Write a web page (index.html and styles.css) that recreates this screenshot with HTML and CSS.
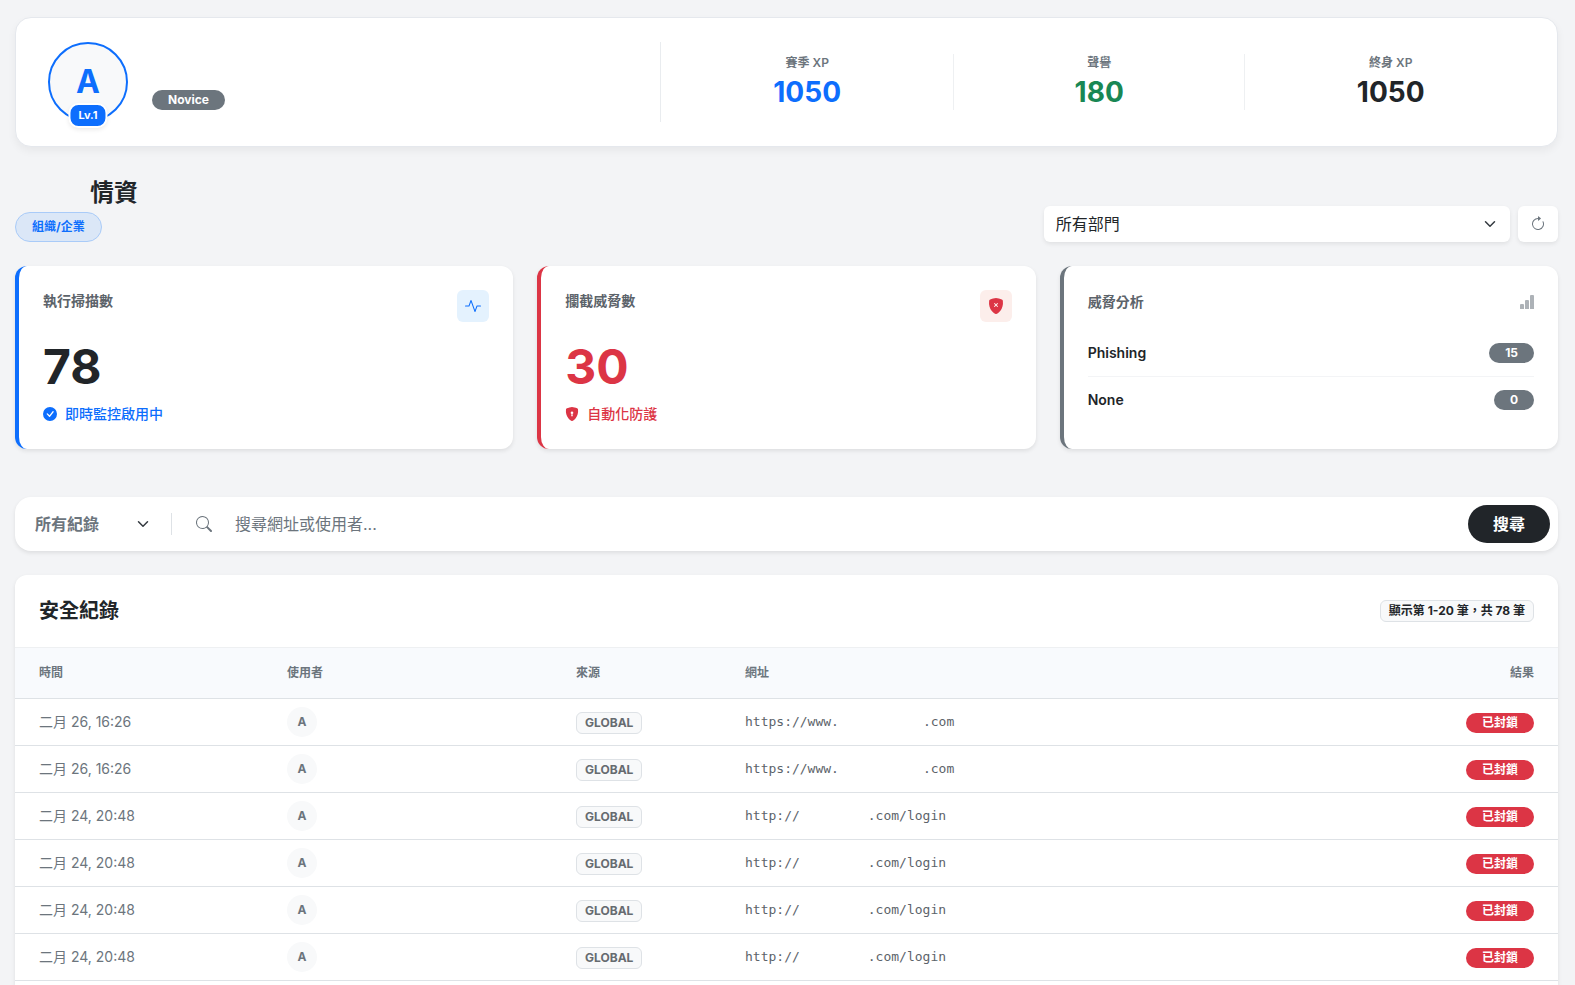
FILE: index.html
```html
<!DOCTYPE html>
<html lang="zh-Hant">
<head>
	<meta charset="utf-8">
	<meta name="viewport" content="width=device-width, initial-scale=1">
	<title>情資</title>
	<link rel="stylesheet" href="styles.css">
</head>
<body>
	<main class="page">
		<section class="profile">
			<div class="profile-user">
				<div class="avatar">
					A
					<span class="avatar-level">Lv.1</span>
				</div>
				<span class="pill pill-gray profile-rank">Novice</span>
			</div>
			<div class="profile-stats">
				<div class="stat">
					<div class="stat-label">賽季 XP</div>
					<div class="stat-value text-blue">1050</div>
				</div>
				<div class="stat">
					<div class="stat-label">聲譽</div>
					<div class="stat-value text-green">180</div>
				</div>
				<div class="stat">
					<div class="stat-label">終身 XP</div>
					<div class="stat-value">1050</div>
				</div>
			</div>
		</section>

		<header class="heading">
			<div class="heading-title">
				<h1>情資</h1>
				<span class="org-badge">組織/企業</span>
			</div>
			<div class="heading-tools">
				<div class="select-wrap">
					<select class="dept-select" aria-label="所有部門">
						<option>所有部門</option>
					</select>
					<svg class="chevron" viewBox="0 0 16 16"><path d="m2 5 6 6 6-6"/></svg>
				</div>
				<button class="refresh" type="button">
					<svg class="icon" viewBox="0 0 16 16"><path fill-rule="evenodd" d="M8 3a5 5 0 1 0 4.546 2.914.5.5 0 0 1 .908-.417A6 6 0 1 1 8 2z"/><path d="M8 4.466V.534a.25.25 0 0 1 .41-.192l2.36 1.966c.12.1.12.284 0 .384L8.41 4.658A.25.25 0 0 1 8 4.466"/></svg>
				</button>
			</div>
		</header>

		<section class="cards">
			<article class="card card-blue">
				<div class="card-head">
					<h2>執行掃描數</h2>
					<span class="card-icon card-icon-blue">
						<svg class="icon" viewBox="0 0 16 16"><path fill-rule="evenodd" d="M6 2a.5.5 0 0 1 .47.33L10 12.036l1.53-4.208A.5.5 0 0 1 12 7.5h3.5a.5.5 0 0 1 0 1h-3.15l-1.88 5.17a.5.5 0 0 1-.94 0L6 3.964 4.47 8.171A.5.5 0 0 1 4 8.5H.5a.5.5 0 0 1 0-1h3.15l1.88-5.17A.5.5 0 0 1 6 2"/></svg>
					</span>
				</div>
				<div class="card-number">78</div>
				<div class="card-note text-blue">
					<svg class="icon-small" viewBox="0 0 16 16"><path d="M16 8A8 8 0 1 1 0 8a8 8 0 0 1 16 0m-3.97-3.03a.75.75 0 0 0-1.08.022L7.477 9.417 5.384 7.323a.75.75 0 0 0-1.06 1.06L6.97 11.03a.75.75 0 0 0 1.079-.02l3.992-4.99a.75.75 0 0 0-.01-1.05z"/></svg>
					即時監控啟用中
				</div>
			</article>

			<article class="card card-red">
				<div class="card-head">
					<h2>攔截威脅數</h2>
					<span class="card-icon card-icon-red">
						<svg class="icon" viewBox="0 0 16 16"><path fill-rule="evenodd" d="M8 0c-.69 0-1.843.265-2.928.56-1.11.3-2.229.655-2.887.87a1.54 1.54 0 0 0-1.044 1.262c-.596 4.477.787 7.795 2.465 9.99a11.8 11.8 0 0 0 2.517 2.453c.386.273.744.482 1.048.625.28.132.581.24.829.24s.548-.108.829-.24a7 7 0 0 0 1.048-.625 11.8 11.8 0 0 0 2.517-2.453c1.678-2.195 3.061-5.513 2.465-9.99a1.54 1.54 0 0 0-1.044-1.263 63 63 0 0 0-2.887-.87C9.843.266 8.69 0 8 0M6.854 5.146 8 6.293l1.146-1.147a.5.5 0 1 1 .708.708L8.707 7l1.147 1.146a.5.5 0 0 1-.708.708L8 7.707 6.854 8.854a.5.5 0 1 1-.708-.708L7.293 7 6.146 5.854a.5.5 0 1 1 .708-.708"/></svg>
					</span>
				</div>
				<div class="card-number text-red">30</div>
				<div class="card-note text-red">
					<svg class="icon-small" viewBox="0 0 16 16"><path fill-rule="evenodd" d="M8 0c-.69 0-1.843.265-2.928.56-1.11.3-2.229.655-2.887.87a1.54 1.54 0 0 0-1.044 1.262c-.596 4.477.787 7.795 2.465 9.99a11.8 11.8 0 0 0 2.517 2.453c.386.273.744.482 1.048.625.28.132.581.24.829.24s.548-.108.829-.24a7 7 0 0 0 1.048-.625 11.8 11.8 0 0 0 2.517-2.453c1.678-2.195 3.061-5.513 2.465-9.99a1.54 1.54 0 0 0-1.044-1.263 63 63 0 0 0-2.887-.87C9.843.266 8.69 0 8 0m0 5a1.5 1.5 0 0 1 .5 2.915l.385 1.99a.5.5 0 0 1-.491.595h-.788a.5.5 0 0 1-.49-.595l.384-1.99A1.5 1.5 0 0 1 8 5"/></svg>
					自動化防護
				</div>
			</article>

			<article class="card card-gray">
				<div class="card-head card-head-list">
					<h2>威脅分析</h2>
					<svg class="icon-small icon-bars" viewBox="0 0 14 14"><path d="M0 10a1 1 0 0 1 1-1h2a1 1 0 0 1 1 1v4H0zM5 6a1 1 0 0 1 1-1h2a1 1 0 0 1 1 1v8H5zM10 1a1 1 0 0 1 1-1h2a1 1 0 0 1 1 1v13h-4z"/></svg>
				</div>
				<ul class="threats">
					<li>Phishing <span class="pill pill-gray">15</span></li>
					<li>None <span class="pill pill-gray">0</span></li>
				</ul>
			</article>
		</section>

		<form class="search">
			<div class="select-wrap search-filter">
				<select class="log-select" aria-label="所有紀錄">
					<option>所有紀錄</option>
				</select>
				<svg class="chevron" viewBox="0 0 16 16"><path d="m2 5 6 6 6-6"/></svg>
			</div>
			<label class="search-label" for="keyword">
				<svg class="icon" viewBox="0 0 16 16"><path d="M11.742 10.344a6.5 6.5 0 1 0-1.397 1.398h-.001q.044.06.098.115l3.85 3.85a1 1 0 0 0 1.415-1.414l-3.85-3.85a1 1 0 0 0-.115-.1zM12 6.5a5.5 5.5 0 1 1-11 0 5.5 5.5 0 0 1 11 0"/></svg>
			</label>
			<input class="search-input" type="text" id="keyword" placeholder="搜尋網址或使用者...">
			<button class="search-button" type="submit">搜尋</button>
		</form>

		<section class="logs">
			<div class="logs-head">
				<h2>安全紀錄</h2>
				<span class="tag tag-count">顯示第 1-20 筆，共 78 筆</span>
			</div>
			<table class="logs-table">
				<thead>
					<tr>
						<th class="col-time">時間</th>
						<th class="col-user">使用者</th>
						<th class="col-source">來源</th>
						<th>網址</th>
						<th class="col-result">結果</th>
					</tr>
				</thead>
				<tbody>
					<tr>
						<td>二月 26, 16:26</td>
						<td><span class="user">A</span></td>
						<td><span class="tag">GLOBAL</span></td>
						<td class="url">https://www.<span class="host host-long"></span>.com</td>
						<td class="col-result"><span class="pill pill-red">已封鎖</span></td>
					</tr>
					<tr>
						<td>二月 26, 16:26</td>
						<td><span class="user">A</span></td>
						<td><span class="tag">GLOBAL</span></td>
						<td class="url">https://www.<span class="host host-long"></span>.com</td>
						<td class="col-result"><span class="pill pill-red">已封鎖</span></td>
					</tr>
					<tr>
						<td>二月 24, 20:48</td>
						<td><span class="user">A</span></td>
						<td><span class="tag">GLOBAL</span></td>
						<td class="url">http://<span class="host"></span>.com/login</td>
						<td class="col-result"><span class="pill pill-red">已封鎖</span></td>
					</tr>
					<tr>
						<td>二月 24, 20:48</td>
						<td><span class="user">A</span></td>
						<td><span class="tag">GLOBAL</span></td>
						<td class="url">http://<span class="host"></span>.com/login</td>
						<td class="col-result"><span class="pill pill-red">已封鎖</span></td>
					</tr>
					<tr>
						<td>二月 24, 20:48</td>
						<td><span class="user">A</span></td>
						<td><span class="tag">GLOBAL</span></td>
						<td class="url">http://<span class="host"></span>.com/login</td>
						<td class="col-result"><span class="pill pill-red">已封鎖</span></td>
					</tr>
					<tr>
						<td>二月 24, 20:48</td>
						<td><span class="user">A</span></td>
						<td><span class="tag">GLOBAL</span></td>
						<td class="url">http://<span class="host"></span>.com/login</td>
						<td class="col-result"><span class="pill pill-red">已封鎖</span></td>
					</tr>
				</tbody>
			</table>
		</section>
	</main>
</body>
</html>
```
FILE: styles.css
```css
* {
	box-sizing: border-box;
	margin: 0;
	padding: 0;
}

body {
	background: #f3f4f6;
	color: #212529;
	font-family: Inter, "Noto Sans CJK TC", sans-serif;
	font-size: 16px;
	line-height: 24px;
}

button, input, select {
	border: 0;
	background: none;
	color: inherit;
	font: inherit;
}

.page {
	display: flex;
	flex-direction: column;
	min-height: 100vh;
	padding: 17px 17px 0 15px;
}

.text-blue { color: #0d6efd; }
.text-green { color: #198754; }
.text-red { color: #dc3545; }

.icon {
	width: 16px;
	height: 16px;
	fill: currentColor;
}
.icon-small {
	width: 14px;
	height: 14px;
	fill: currentColor;
}

.pill {
	display: inline-block;
	padding: 0 16px;
	border-radius: 10px;
	color: #fff;
	font-size: 12px;
	font-weight: 700;
	line-height: 20px;
}
.pill-gray { background: #6c757d; }
.pill-red { background: #dc3545; }

.tag {
	display: inline-block;
	padding: 0 8px;
	border: 1px solid #dee2e6;
	border-radius: 6px;
	background: #f8f9fa;
	color: #666b70;
	font-size: 12px;
	font-weight: 700;
	line-height: 20px;
}

/* profile */
.profile {
	display: grid;
	grid-template-columns: 5fr 7fr;
	padding: 24px 21px 24px 19px;
	border: 1px solid #e5e8ed;
	border-radius: 16px;
	background: #fff;
	box-shadow: 0 4px 8px rgba(0, 0, 0, .05);
}
.profile-user {
	display: flex;
	gap: 24px;
	padding-left: 13px;
}
.avatar {
	position: relative;
	width: 80px;
	height: 80px;
	border: 2px solid #0d6efd;
	border-radius: 50%;
	background: #f8f9fa;
	color: #0d6efd;
	font-size: 32px;
	font-weight: 700;
	line-height: 76px;
	text-align: center;
}
.avatar-level {
	position: absolute;
	bottom: -8px;
	left: 50%;
	transform: translateX(-50%);
	padding: 0 8px;
	border: 2px solid #fff;
	border-radius: 10px;
	background: #0d6efd;
	box-shadow: 0 2px 4px rgba(0, 0, 0, .08);
	color: #fff;
	font-size: 11px;
	line-height: 21px;
}
.profile-rank {
	align-self: flex-end;
	margin-bottom: 12px;
}
.profile-stats {
	display: grid;
	grid-template-columns: repeat(3, 1fr);
	align-items: center;
	border-left: 1px solid #e9ecef;
}
.stat {
	text-align: center;
}
.stat + .stat {
	border-left: 1px solid #eef0f2;
}
.stat-label {
	color: #6c757d;
	font-size: 12px;
	font-weight: 600;
	line-height: 18px;
}
.stat-value {
	padding-top: 2px;
	font-size: 28px;
	font-weight: 700;
	line-height: 36px;
}

/* heading */
.heading {
	display: grid;
	grid-template-columns: 2fr 1fr;
	align-items: end;
	margin-top: 27px;
	margin-bottom: 24px;
}
.heading-title h1 {
	margin-bottom: 1px;
	padding-left: 75px;
	font-size: 24px;
	line-height: 37px;
}
.org-badge {
	display: block;
	width: fit-content;
	padding: 0 16px;
	border: 1px solid #a9cbf8;
	border-radius: 15px;
	background: #dbe7f7;
	color: #0d6efd;
	font-size: 12px;
	font-weight: 700;
	line-height: 28px;
}
.heading-tools {
	display: flex;
	gap: 8px;
}
.select-wrap {
	position: relative;
	flex: 1;
}
.select-wrap select {
	width: 100%;
	appearance: none;
}
.chevron {
	position: absolute;
	top: 50%;
	right: 14px;
	width: 12px;
	height: 12px;
	margin-top: -6px;
	fill: none;
	stroke: #343a40;
	stroke-width: 2;
	stroke-linecap: round;
	stroke-linejoin: round;
	pointer-events: none;
}
.dept-select, .refresh {
	height: 36px;
	border-radius: 6px;
	background: #fff;
	box-shadow: 0 2px 4px rgba(0, 0, 0, .08);
}
.dept-select {
	display: block;
	padding: 0 12px;
}
.refresh {
	display: grid;
	place-items: center;
	width: 40px;
	color: #6c757d;
}

/* cards */
.cards {
	display: grid;
	grid-template-columns: repeat(3, 1fr);
	gap: 24px;
	margin-bottom: 48px;
}
.card {
	min-height: 183px;
	padding: 24px;
	border-left: 4px solid;
	border-radius: 12px;
	background: #fff;
	box-shadow: 0 2px 4px rgba(0, 0, 0, .09);
}
.card-blue { border-left-color: #0d6efd; }
.card-red { border-left-color: #dc3545; }
.card-gray { border-left-color: #6c757d; }
.card-head {
	display: flex;
	justify-content: space-between;
	height: 32px;
}
.card-head h2 {
	color: #5c636a;
	font-size: 14px;
	font-weight: 600;
	line-height: 22px;
}
.card-head-list {
	align-items: center;
	height: 24px;
}
.icon-bars {
	color: #adb2b7;
}
.card-icon {
	display: grid;
	place-items: center;
	width: 32px;
	height: 32px;
	border-radius: 6px;
}
.card-icon-blue {
	background: #e4f2fe;
	color: #0d6efd;
}
.card-icon-red {
	background: #fceeeb;
	color: #dc3545;
}
.card-number {
	margin-top: 16px;
	font-size: 48px;
	font-weight: 700;
	line-height: 58px;
}
.card-note {
	display: flex;
	align-items: center;
	gap: 8px;
	margin-top: 7px;
	font-size: 14px;
	font-weight: 500;
	line-height: 21px;
}
.threats {
	margin-top: 16px;
	list-style: none;
	font-size: 14px;
	font-weight: 600;
}
.threats li {
	display: flex;
	align-items: center;
	justify-content: space-between;
	height: 46px;
}
.threats li + li {
	border-top: 1px solid #f3f4f6;
}

/* search */
.search {
	display: flex;
	align-items: center;
	margin-bottom: 24px;
	padding: 8px;
	border-radius: 16px;
	background: #fff;
	box-shadow: 0 2px 4px rgba(0, 0, 0, .09);
}
.search-filter {
	flex: none;
	width: 149px;
	border-right: 1px solid #dee2e6;
}
.search-filter .chevron {
	right: 22px;
}
.log-select {
	display: block;
	padding: 0 12px;
	color: #6c757d;
	font-weight: 600;
	line-height: 22px;
}
.search-label {
	display: flex;
	padding: 0 23px 0 24px;
	color: #6c757d;
}
.search-input {
	flex: 1;
	min-width: 0;
	outline: 0;
}
.search-input::placeholder {
	color: #6c757d;
}
.search-button {
	height: 38px;
	padding: 0 25px;
	border-radius: 19px;
	background: #212529;
	color: #fff;
	font-weight: 700;
}

/* logs */
.logs {
	flex: 1;
	border-radius: 12px 12px 0 0;
	background: #fff;
	box-shadow: 0 2px 4px rgba(0, 0, 0, .09);
}
.logs-head {
	display: flex;
	align-items: center;
	justify-content: space-between;
	height: 72px;
	padding: 0 24px;
}
.logs-head h2 {
	font-size: 20px;
	line-height: 24px;
}
.tag-count {
	color: #212529;
}
.logs-table {
	width: 100%;
	border-collapse: collapse;
	table-layout: fixed;
	color: #6c757d;
	font-size: 14px;
}
.logs-table th, .logs-table td {
	padding: 0 24px 0 0;
	border-bottom: 1px solid #dee2e6;
	text-align: left;
	vertical-align: middle;
}
.logs-table th:first-child, .logs-table td:first-child {
	padding-left: 24px;
}
.logs-table th {
	height: 51px;
	border-top: 1px solid #eef0f2;
	background: #f8fafd;
	font-size: 12px;
	font-weight: 600;
}
.logs-table td {
	height: 47px;
}
.logs-table .col-result {
	width: 15%;
	text-align: right;
}
.col-time { width: 272px; }
.col-user { width: 289px; }
.col-source { width: 169px; }
.user {
	display: block;
	width: 30px;
	height: 30px;
	border-radius: 50%;
	background: #f8f9fa;
	font-size: 12px;
	font-weight: 700;
	line-height: 30px;
	text-align: center;
}
.logs-table .url {
	color: #5c636a;
	font-family: "DejaVu Sans Mono", monospace;
	font-size: 13px;
}
.host {
	display: inline-block;
	width: 68px;
}
.host-long {
	width: 84px;
}
```
